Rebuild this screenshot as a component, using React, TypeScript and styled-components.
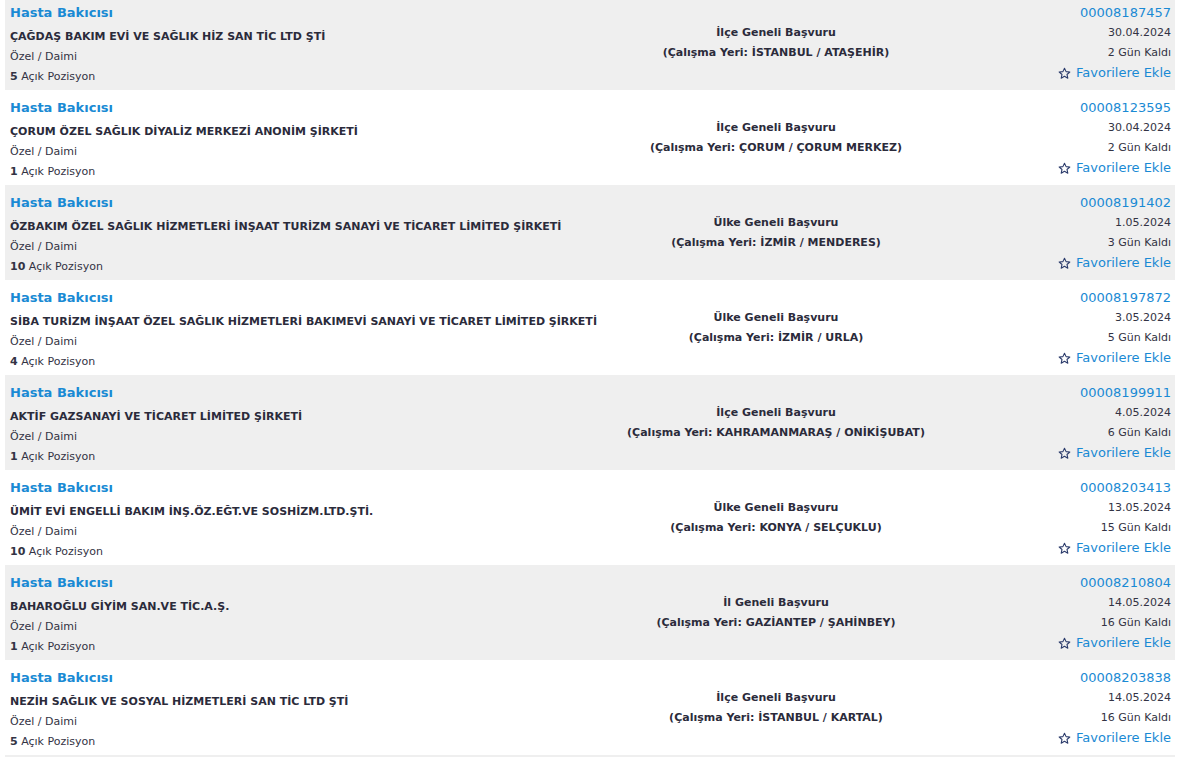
import styled, { createGlobalStyle } from "styled-components";

type Posting = {
  company: string;
  positions: number;
  scope: string;
  place: string;
  id: string;
  date: string;
  daysLeft: number;
};

const postings: Posting[] = [
  { company: "ÇAĞDAŞ BAKIM EVİ VE SAĞLIK HİZ SAN TİC LTD ŞTİ", positions: 5, scope: "İlçe Geneli Başvuru", place: "İSTANBUL / ATAŞEHİR", id: "00008187457", date: "30.04.2024", daysLeft: 2 },
  { company: "ÇORUM ÖZEL SAĞLIK DİYALİZ MERKEZİ ANONİM ŞİRKETİ", positions: 1, scope: "İlçe Geneli Başvuru", place: "ÇORUM / ÇORUM MERKEZ", id: "00008123595", date: "30.04.2024", daysLeft: 2 },
  { company: "ÖZBAKIM ÖZEL SAĞLIK HİZMETLERİ İNŞAAT TURİZM SANAYİ VE TİCARET LİMİTED ŞİRKETİ", positions: 10, scope: "Ülke Geneli Başvuru", place: "İZMİR / MENDERES", id: "00008191402", date: "1.05.2024", daysLeft: 3 },
  { company: "SİBA TURİZM İNŞAAT ÖZEL SAĞLIK HİZMETLERİ BAKIMEVİ SANAYİ VE TİCARET LİMİTED ŞİRKETİ", positions: 4, scope: "Ülke Geneli Başvuru", place: "İZMİR / URLA", id: "00008197872", date: "3.05.2024", daysLeft: 5 },
  { company: "AKTİF GAZSANAYİ VE TİCARET LİMİTED ŞİRKETİ", positions: 1, scope: "İlçe Geneli Başvuru", place: "KAHRAMANMARAŞ / ONİKİŞUBAT", id: "00008199911", date: "4.05.2024", daysLeft: 6 },
  { company: "ÜMİT EVİ ENGELLİ BAKIM İNŞ.ÖZ.EĞT.VE SOSHİZM.LTD.ŞTİ.", positions: 10, scope: "Ülke Geneli Başvuru", place: "KONYA / SELÇUKLU", id: "00008203413", date: "13.05.2024", daysLeft: 15 },
  { company: "BAHAROĞLU GİYİM SAN.VE TİC.A.Ş.", positions: 1, scope: "İl Geneli Başvuru", place: "GAZİANTEP / ŞAHİNBEY", id: "00008210804", date: "14.05.2024", daysLeft: 16 },
  { company: "NEZİH SAĞLIK VE SOSYAL HİZMETLERİ SAN TİC LTD ŞTİ", positions: 5, scope: "İlçe Geneli Başvuru", place: "İSTANBUL / KARTAL", id: "00008203838", date: "14.05.2024", daysLeft: 16 },
];

const GlobalStyle = createGlobalStyle`
  html, body {
    margin: 0;
    padding: 0;
    background: #ffffff;
    overflow: hidden;
  }
  body {
    font-family: "DejaVu Sans", Verdana, sans-serif;
    color: #333;
  }
`;

export default function App() {
  return (
    <>
      <GlobalStyle />
      <List>
        {postings.map((p, i) => (
          <Row key={p.id + i} shaded={i % 2 === 0}>
            <Left>
              <Title href="#">Hasta Bakıcısı</Title>
              <Company>{p.company}</Company>
              <Meta>Özel / Daimi</Meta>
              <Meta>
                <b>{p.positions}</b> Açık Pozisyon
              </Meta>
            </Left>
            <Middle>
              <Bold>{p.scope}</Bold>
              <Bold>(Çalışma Yeri: {p.place})</Bold>
            </Middle>
            <Right>
              <IdLink href="#">{p.id}</IdLink>
              <Meta>{p.date}</Meta>
              <Meta>{p.daysLeft} Gün Kaldı</Meta>
              <FavLink href="#">
                <StarIcon />
                Favorilere Ekle
              </FavLink>
            </Right>
          </Row>
        ))}
      </List>
    </>
  );
}

function StarIcon() {
  return (
    <svg width="13" height="13" viewBox="0 0 24 24" fill="none">
      <path
        d="M12 2.2l2.9 6.3 6.9.7-5.2 4.6 1.5 6.8L12 17.1l-6.1 3.5 1.5-6.8-5.2-4.6 6.9-.7z"
        stroke="#2b3b6b"
        strokeWidth="2"
        strokeLinejoin="round"
      />
    </svg>
  );
}

const List = styled.div`
  margin: -5px 6px 0 5px;
  border-bottom: 2px solid #efefef;
`;

const Row = styled.div<{ shaded: boolean }>`
  display: grid;
  grid-template-columns: 596px 340px 1fr;
  align-items: center;
  height: 95px;
  box-sizing: border-box;
  padding: 0 4px 0 5px;
  background: ${(p) => (p.shaded ? "#efefef" : "#ffffff")};
`;

const Left = styled.div`
  display: flex;
  flex-direction: column;
  padding-top: 5px;
  white-space: nowrap;
`;

const Title = styled.a`
  font-size: 13px;
  font-weight: bold;
  line-height: 20px;
  color: #1a8ad4;
  text-decoration: none;
  margin-bottom: 4px;
`;

const Company = styled.span`
  font-size: 11px;
  font-weight: bold;
  line-height: 20px;
  color: #2b2b3b;
`;

const Meta = styled.span`
  font-size: 11px;
  line-height: 20px;
  color: #333344;

  b {
    font-weight: bold;
  }
`;

const Middle = styled.div`
  display: flex;
  flex-direction: column;
  align-items: center;
  white-space: nowrap;
`;

const Bold = styled.span`
  font-size: 11px;
  font-weight: bold;
  line-height: 20px;
  color: #2b2b3b;
`;

const Right = styled.div`
  display: flex;
  flex-direction: column;
  align-items: flex-end;
  padding-top: 1px;
  white-space: nowrap;
`;

const IdLink = styled.a`
  font-size: 13px;
  line-height: 20px;
  color: #1a8ad4;
  text-decoration: none;
`;

const FavLink = styled.a`
  display: flex;
  align-items: center;
  gap: 5px;
  font-size: 13px;
  line-height: 20px;
  color: #1a8ad4;
  text-decoration: none;
`;
